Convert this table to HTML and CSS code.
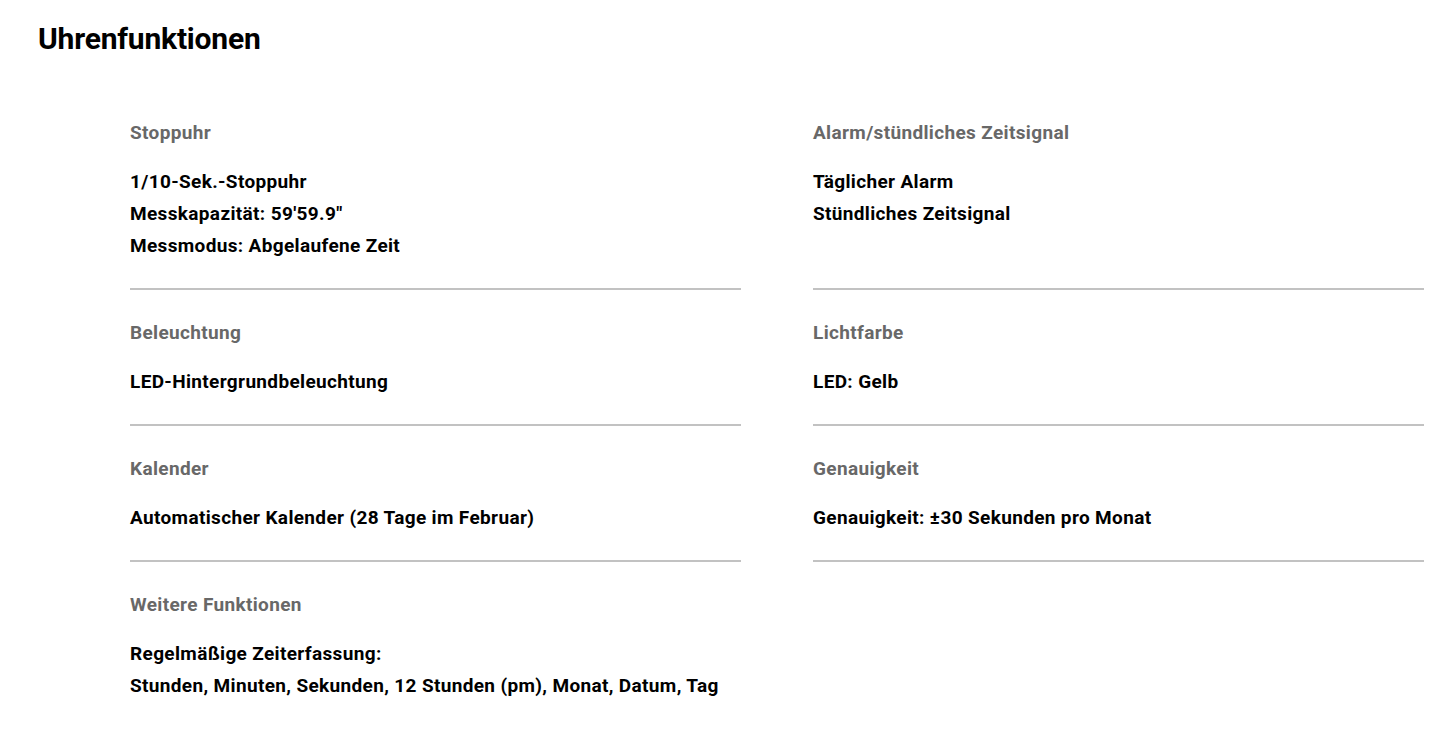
FILE: index.html
```html
<!DOCTYPE html>
<html lang="de">
<head>
<meta charset="utf-8">
<title>Uhrenfunktionen</title>
<link rel="stylesheet" href="styles.css">
</head>
<body>
<section class="spec">
  <h1 class="spec-title">Uhrenfunktionen</h1>
  <div class="spec-grid">
    <div class="spec-item">
      <h2 class="spec-label">Stoppuhr</h2>
      <ul class="spec-values">
        <li>1/10-Sek.-Stoppuhr</li>
        <li>Messkapazität: 59'59.9"</li>
        <li>Messmodus: Abgelaufene Zeit</li>
      </ul>
    </div>
    <div class="spec-item">
      <h2 class="spec-label">Alarm/stündliches Zeitsignal</h2>
      <ul class="spec-values">
        <li>Täglicher Alarm</li>
        <li>Stündliches Zeitsignal</li>
      </ul>
    </div>
    <div class="spec-item">
      <h2 class="spec-label">Beleuchtung</h2>
      <ul class="spec-values">
        <li>LED-Hintergrundbeleuchtung</li>
      </ul>
    </div>
    <div class="spec-item">
      <h2 class="spec-label">Lichtfarbe</h2>
      <ul class="spec-values">
        <li>LED: Gelb</li>
      </ul>
    </div>
    <div class="spec-item">
      <h2 class="spec-label">Kalender</h2>
      <ul class="spec-values">
        <li>Automatischer Kalender (28 Tage im Februar)</li>
      </ul>
    </div>
    <div class="spec-item">
      <h2 class="spec-label">Genauigkeit</h2>
      <ul class="spec-values">
        <li>Genauigkeit: ±30 Sekunden pro Monat</li>
      </ul>
    </div>
    <div class="spec-item spec-item-last">
      <h2 class="spec-label">Weitere Funktionen</h2>
      <ul class="spec-values">
        <li>Regelmäßige Zeiterfassung:</li>
        <li>Stunden, Minuten, Sekunden, 12 Stunden (pm), Monat, Datum, Tag</li>
      </ul>
    </div>
  </div>
</section>
</body>
</html>
```
FILE: styles.css
```css
* { box-sizing: border-box; }

html, body {
  margin: 0;
  padding: 0;
  background: #ffffff;
}

body {
  font-family: Roboto, "Liberation Sans", Arial, sans-serif;
  color: #000000;
}

.spec {
  padding: 19px 21px 0 38px;
}

.spec-title {
  margin: 0;
  font-size: 30px;
  line-height: 40px;
  font-weight: 700;
  letter-spacing: -0.2px;
  color: #000;
}

.spec-grid {
  margin: 31px 0 0 92px;
  display: grid;
  grid-template-columns: 1fr 1fr;
  column-gap: 72px;
}

.spec-item {
  padding: 31px 0 26px;
  border-bottom: 2px solid #c2c2c2;
}

.spec-item-last {
  border-bottom: none;
}

.spec-label {
  margin: 0 0 21px;
  font-size: 19px;
  line-height: 24px;
  font-weight: 700;
  letter-spacing: 0.35px;
  color: #686868;
}

.spec-values {
  list-style: none;
  margin: 0;
  padding: 0;
  font-size: 19px;
  line-height: 32px;
  font-weight: 700;
  letter-spacing: 0.35px;
  color: #000;
}
```
